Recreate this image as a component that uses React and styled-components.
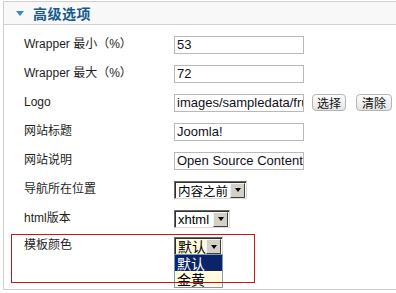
import React from "react";
import styled, { createGlobalStyle } from "styled-components";

const Global = createGlobalStyle`
  html, body { margin: 0; padding: 0; background: #fff; overflow: hidden; }
  body { font-family: "Liberation Sans", "Noto Sans CJK SC", sans-serif; }
`;

const Panel = styled.div`
  margin: 1px 0 0 3px;
  width: 392px;
  border: 1px solid #cfcfcf;
  border-right: none;
  background: #fff;
`;

const Header = styled.div`
  display: flex;
  align-items: center;
  height: 22px;
  background: #f8f8f8;
  border-bottom: 1px solid #d2d2d2;
  padding-left: 12px;
  gap: 9px;
`;

const Caret = styled.span`
  width: 0;
  height: 0;
  border-left: 4px solid transparent;
  border-right: 4px solid transparent;
  border-top: 5px solid #2e8cc8;
`;

const Title = styled.span`
  font-family: "Noto Sans CJK SC", sans-serif;
  font-weight: 700;
  font-size: 14px;
  color: #165b8c;
  letter-spacing: 0.5px;
`;

const Body = styled.div`
  padding-top: 5px;
`;

const Row = styled.div`
  position: relative;
  display: flex;
  align-items: ${(p) => (p.$top ? "flex-start" : "center")};
  height: ${(p) => p.$h || 29}px;
  padding-top: ${(p) => (p.$top ? 4 : 0)}px;
  box-sizing: border-box;

  ${(p) =>
    p.$marked &&
    `
    &::after {
      content: "";
      position: absolute;
      left: 7px;
      top: 1px;
      width: 244px;
      height: 49px;
      box-sizing: border-box;
      border: 1px solid #c4161c;
      z-index: 5;
      pointer-events: none;
    }
  `}
`;

const Label = styled.div`
  flex: none;
  width: 170px;
  padding-left: 20px;
  box-sizing: border-box;
  font-size: 12px;
  line-height: 17px;
  color: #1e1e1e;
  white-space: nowrap;
`;

const TextInput = styled.div`
  flex: none;
  width: 130px;
  height: 18px;
  box-sizing: border-box;
  border: 1px solid #b9b9b9;
  padding: 0 2px;
  font-size: 13px;
  line-height: 16px;
  color: #101020;
  white-space: nowrap;
  overflow: hidden;
`;

const Button = styled.div`
  flex: none;
  margin-left: ${(p) => p.$ml}px;
  width: ${(p) => p.$w}px;
  height: 17px;
  box-sizing: border-box;
  border: 1px solid #b4b4b4;
  border-radius: 4px;
  background: linear-gradient(#fdfdfd, #e4e4e4);
  font-family: "Noto Sans CJK SC", sans-serif;
  font-size: 12px;
  line-height: 15px;
  text-align: center;
  color: #111;
`;

const SelectWrap = styled.div`
  position: relative;
`;

const Select = styled.div`
  display: flex;
  width: ${(p) => p.$w}px;
  height: 18px;
  box-sizing: border-box;
  border: 1px solid;
  border-color: #6a6a6a #dcdcdc #dcdcdc #6a6a6a;
  box-shadow: inset 1px 1px 0 #303030;
  background: ${(p) => p.$bg || "#fff"};
  padding: 1px;
`;

const SelectText = styled.div`
  flex: 1;
  padding-left: 2px;
  font-family: ${(p) => (p.$cjk ? '"Noto Sans CJK SC", sans-serif' : '"Liberation Sans", sans-serif')};
  font-size: ${(p) => p.$fs || 13}px;
  line-height: 15px;
  color: #000;
  white-space: nowrap;
`;

const ArrowBox = styled.div`
  flex: none;
  width: 15px;
  height: 15px;
  box-sizing: border-box;
  background: #d4d0c8;
  border: 1px solid;
  border-color: #f4f4f4 #404040 #404040 #f4f4f4;
  display: flex;
  align-items: center;
  justify-content: center;

  &::before {
    content: "";
    width: 0;
    height: 0;
    border-left: 3.5px solid transparent;
    border-right: 3.5px solid transparent;
    border-top: 4px solid #000;
  }
`;

const DropList = styled.div`
  position: absolute;
  left: 0;
  top: 17px;
  width: 49px;
  box-sizing: border-box;
  border: 1px solid #7f9db9;
  background: #fffbdc;
  z-index: 4;
`;

const Option = styled.div`
  height: 16px;
  padding-left: 2px;
  font-family: "Noto Sans CJK SC", sans-serif;
  font-size: 14px;
  line-height: 16px;
  color: ${(p) => (p.$active ? "#fff" : "#000")};
  background: ${(p) => (p.$active ? "#0a246a" : "transparent")};
`;

const fields = [
  { label: "Wrapper 最小（%）", value: "53" },
  { label: "Wrapper 最大（%）", value: "72" },
];

export default function App() {
  return (
    <>
      <Global />
      <Panel>
        <Header>
          <Caret />
          <Title>高级选项</Title>
        </Header>
        <Body>
          {fields.map((f) => (
            <Row key={f.label}>
              <Label>{f.label}</Label>
              <TextInput>{f.value}</TextInput>
            </Row>
          ))}
          <Row>
            <Label>Logo</Label>
            <TextInput>images/sampledata/fruitshop</TextInput>
            <Button $ml={8} $w={34}>选择</Button>
            <Button $ml={10} $w={36}>清除</Button>
          </Row>
          <Row>
            <Label>网站标题</Label>
            <TextInput>Joomla!</TextInput>
          </Row>
          <Row>
            <Label>网站说明</Label>
            <TextInput>Open Source Content Management</TextInput>
          </Row>
          <Row>
            <Label>导航所在位置</Label>
            <Select $w={73}>
              <SelectText $cjk $fs={12.5}>内容之前</SelectText>
              <ArrowBox />
            </Select>
          </Row>
          <Row>
            <Label>html版本</Label>
            <Select $w={56}>
              <SelectText>xhtml</SelectText>
              <ArrowBox />
            </Select>
          </Row>
          <Row $top $h={56} $marked>
            <Label>模板颜色</Label>
            <SelectWrap>
              <Select $w={49} $bg="#fffbdc">
                <SelectText $cjk $fs={14}>默认</SelectText>
                <ArrowBox />
              </Select>
              <DropList>
                <Option $active>默认</Option>
                <Option>金黄</Option>
              </DropList>
            </SelectWrap>
          </Row>
        </Body>
      </Panel>
    </>
  );
}
